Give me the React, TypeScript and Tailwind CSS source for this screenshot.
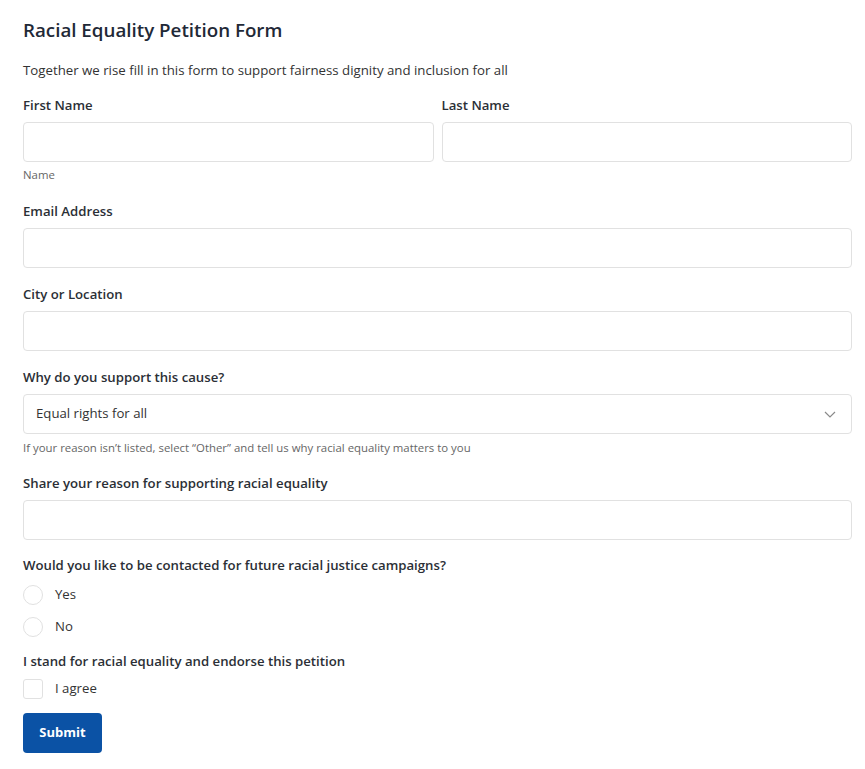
import React from "react";

const font = { fontFamily: '"Open Sans", "Noto Sans", sans-serif' };

function Label({ children }: { children: React.ReactNode }) {
  return (
    <div className="text-[13.2px] leading-[18px] font-semibold text-[#2b2f36]">
      {children}
    </div>
  );
}

function Input() {
  return (
    <div className="mt-[8px] h-[40px] w-full rounded-[4px] border border-[#e1e1e1] bg-white" />
  );
}

export default function App() {
  return (
    <div
      className="min-h-[769px] w-[865px] bg-white pl-[23px] pr-[13px] pt-[18px] text-[#2b2f36]"
      style={font}
    >
      <h1 className="text-[18.75px] leading-[24px] font-semibold text-[#1f2937]">
        Racial Equality Petition Form
      </h1>
      <p className="mt-[19px] text-[13.25px] leading-[18px] text-[#333]">
        Together we rise fill in this form to support fairness dignity and inclusion for all
      </p>

      <div className="mt-[17px] grid grid-cols-2 gap-x-[8px]">
        <div>
          <Label>First Name</Label>
          <Input />
        </div>
        <div>
          <Label>Last Name</Label>
          <Input />
        </div>
      </div>
      <div className="mt-[6px] text-[11.4px] leading-[14px] text-[#666]">Name</div>

      <div className="mt-[20px]">
        <Label>Email Address</Label>
        <Input />
      </div>

      <div className="mt-[17px]">
        <Label>City or Location</Label>
        <Input />
      </div>

      <div className="mt-[17px]">
        <Label>Why do you support this cause?</Label>
        <div className="mt-[8px] flex h-[40px] w-full items-center justify-between rounded-[4px] border border-[#e1e1e1] bg-white pl-[12px] pr-[15px]">
          <span className="text-[13.2px] text-[#333]">Equal rights for all</span>
          <svg width="12" height="7" viewBox="0 0 12 7" fill="none">
            <path d="M1 1l5 5 5-5" stroke="#8a8a8a" strokeWidth="1.2" />
          </svg>
        </div>
      </div>
      <div className="mt-[7px] text-[11.4px] leading-[14px] text-[#666]">
        If your reason isn’t listed, select “Other” and tell us why racial equality matters to you
      </div>

      <div className="mt-[19px]">
        <Label>Share your reason for supporting racial equality</Label>
        <Input />
      </div>

      <div className="mt-[16px]">
        <Label>Would you like to be contacted for future racial justice campaigns?</Label>
        <div className="mt-[11px] flex flex-col gap-[12px]">
          {["Yes", "No"].map((o) => (
            <label key={o} className="flex items-center gap-[12px]">
              <span className="h-[20px] w-[20px] rounded-full border border-[#e1e1e1] bg-white" />
              <span className="text-[13.2px] text-[#333]">{o}</span>
            </label>
          ))}
        </div>
      </div>

      <div className="mt-[15px]">
        <Label>I stand for racial equality and endorse this petition</Label>
        <label className="mt-[9px] flex items-center gap-[12px]">
          <span className="h-[20px] w-[20px] rounded-[3px] border border-[#e1e1e1] bg-white" />
          <span className="text-[13.2px] text-[#333]">I agree</span>
        </label>
      </div>

      <button className="mt-[14px] h-[40px] w-[79px] rounded-[4px] bg-[#0b52a5] text-[13px] font-bold text-white">
        Submit
      </button>
    </div>
  );
}
